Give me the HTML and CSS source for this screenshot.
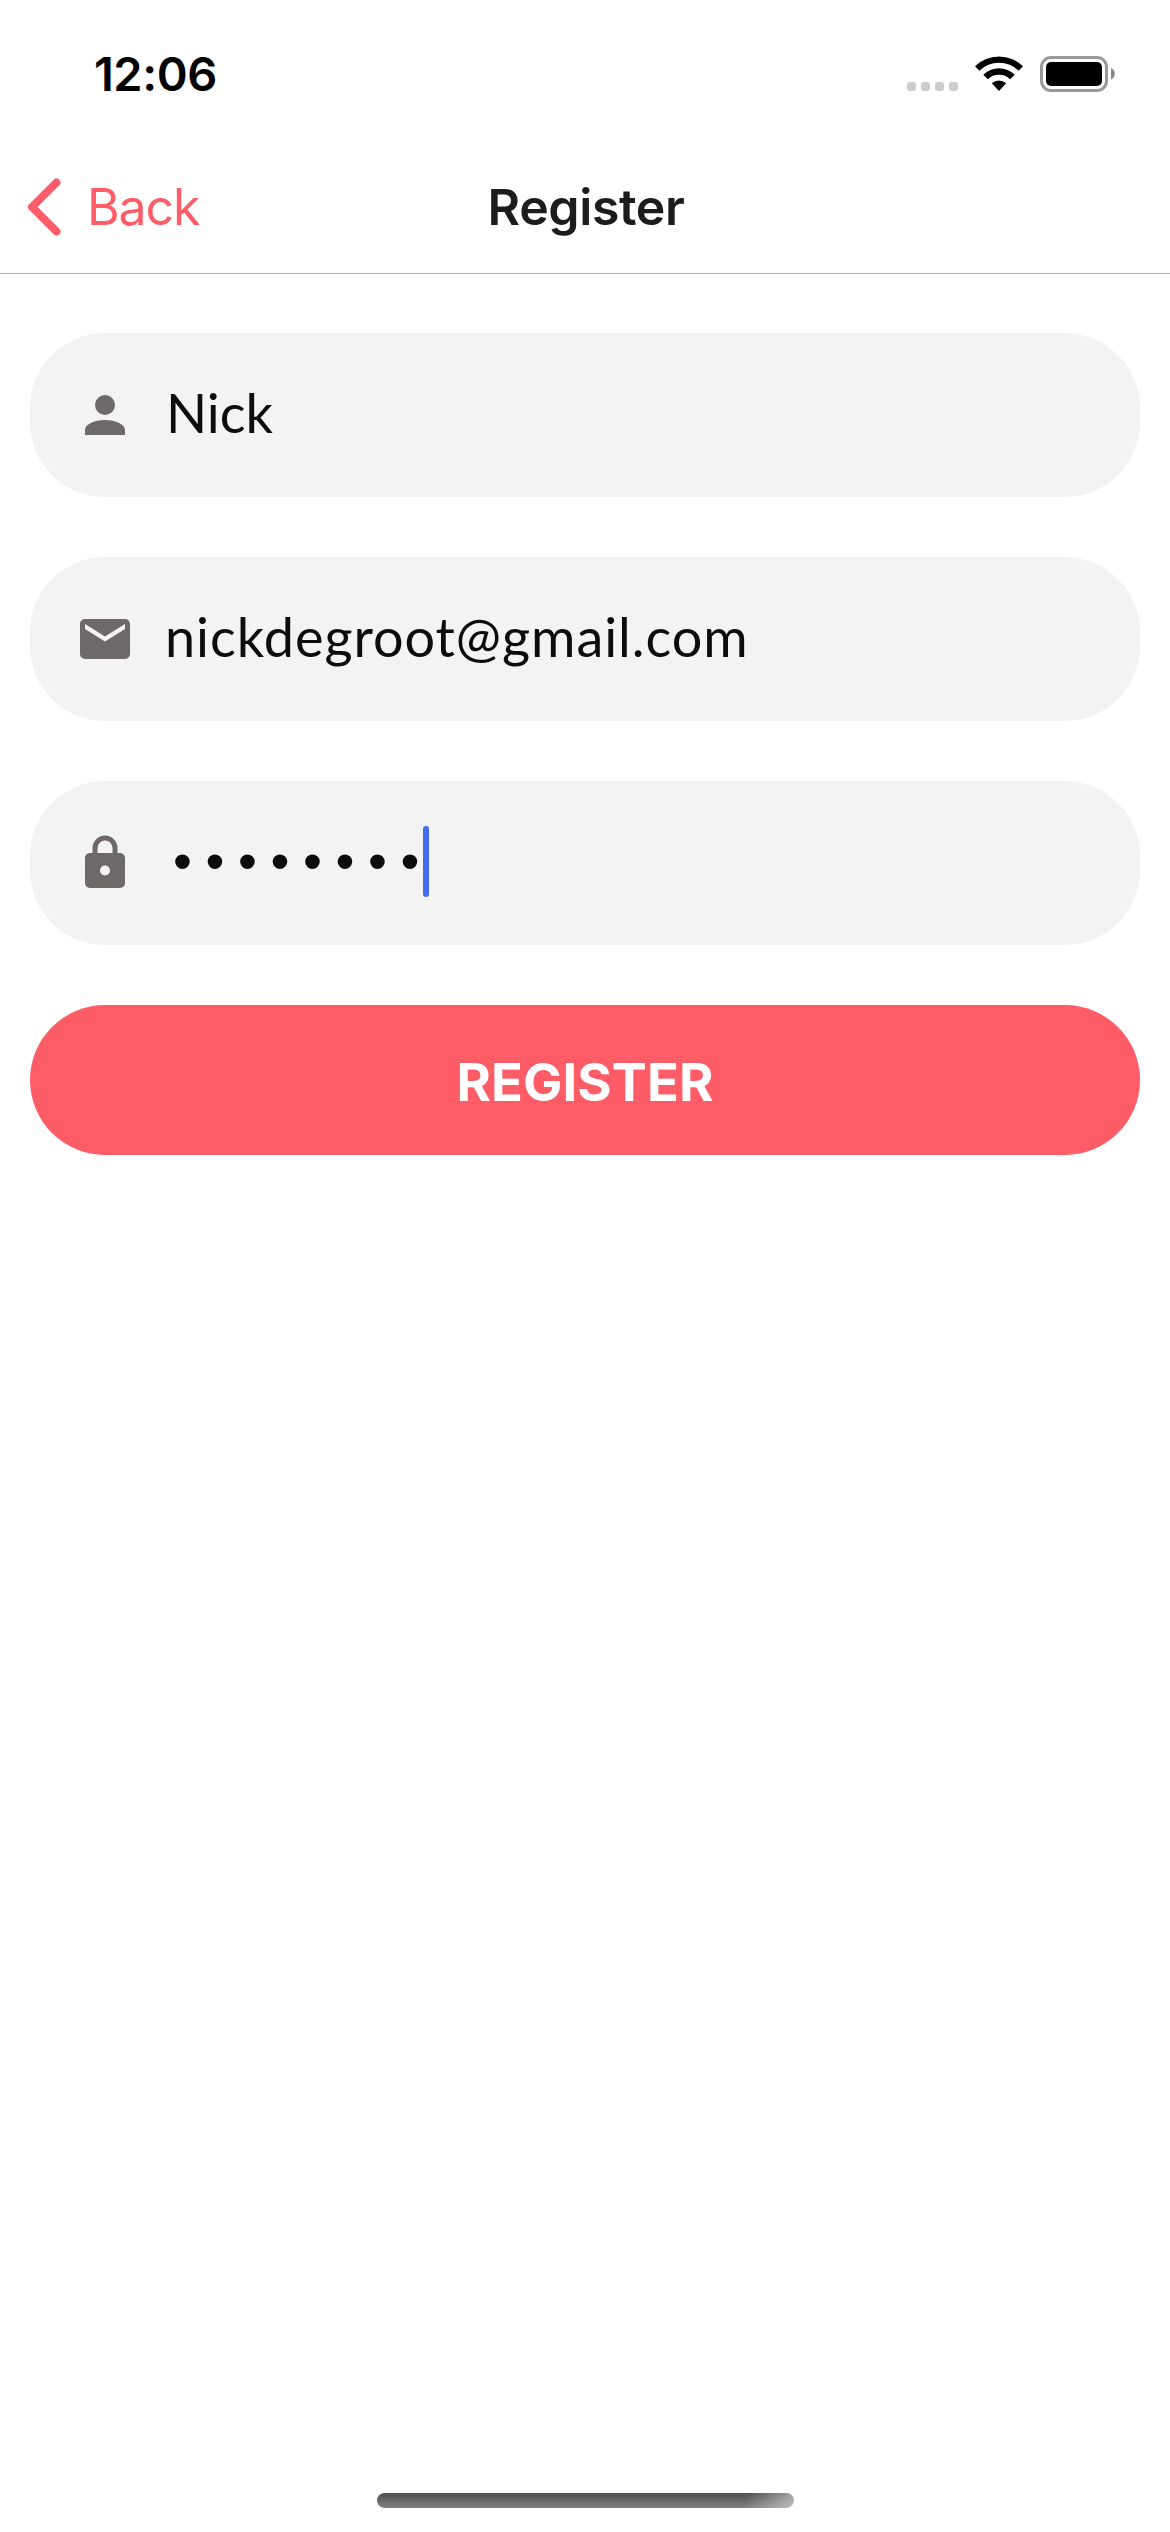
FILE: index.html
```html
<!DOCTYPE html>
<html lang="en">
<head>
<meta charset="utf-8">
<title>Register</title>
<link rel="stylesheet" href="styles.css">
</head>
<body>
<div class="screen">
  <div class="status-bar">
    <span class="time">12:06</span>
    <div class="indicators">
      <div class="signal"><i></i><i></i><i></i><i></i></div>
      <svg class="wifi" viewBox="0 0 48 36" width="48" height="36">
        <path d="M0 11.2A34.5 34.5 0 0 1 48 11.2L43.6 15.8A28 28 0 0 0 4.4 15.8Z"/>
        <path d="M8.3 19.7A22.5 22.5 0 0 1 39.7 19.7L35.1 24.3A16 16 0 0 0 12.9 24.3Z"/>
        <path d="M16.8 28.3A10.4 10.4 0 0 1 31.2 28.3L24 36Z"/>
      </svg>
      <svg class="battery" viewBox="0 0 75 36" width="75" height="36">
        <rect x="1.5" y="1.5" width="65" height="33" rx="9.5" fill="none" stroke="#999" stroke-width="3"/>
        <rect x="6" y="6" width="56" height="24" rx="5"/>
        <path d="M71 12C76 14 76 21.500 71 23.500Z" fill="#888"/>
      </svg>
    </div>
  </div>
  <header class="nav">
    <a class="back">
      <svg viewBox="0 0 34 58" width="34" height="58"><path d="M29.500 4.500L5 29L29.500 53.500" fill="none" stroke="currentColor" stroke-width="8" stroke-linecap="round" stroke-linejoin="round"/></svg>
      <span>Back</span>
    </a>
    <h1 class="title">Register</h1>
  </header>
  <main class="form">
    <div class="field">
      <svg class="icon" viewBox="0 0 24 24"><path d="M12 4A4 4 0 0 1 16 8A4 4 0 0 1 12 12A4 4 0 0 1 8 8A4 4 0 0 1 12 4M12 14C16.420 14 20 15.790 20 18V20H4V18C4 15.790 7.580 14 12 14Z"/></svg>
      <span class="value name">Nick</span>
    </div>
    <div class="field">
      <svg class="icon" viewBox="0 0 24 24"><path d="M20 8L12 13L4 8V6L12 11L20 6M20 4H4C2.890 4 2 4.890 2 6V18A2 2 0 0 0 4 20H20A2 2 0 0 0 22 18V6C22 4.890 21.100 4 20 4Z"/></svg>
      <span class="value email">nickdegroot@gmail.com</span>
    </div>
    <div class="field">
      <svg class="icon" viewBox="0 0 24 24"><path d="M12 17A2 2 0 0 0 14 15C14 13.890 13.100 13 12 13A2 2 0 0 0 10 15A2 2 0 0 0 12 17M18 8A2 2 0 0 1 20 10V20A2 2 0 0 1 18 22H6A2 2 0 0 1 4 20V10C4 8.890 4.900 8 6 8H7V6A5 5 0 0 1 12 1A5 5 0 0 1 17 6V8H18M12 3A3 3 0 0 0 9 6V8H15V6A3 3 0 0 0 12 3Z"/></svg>
      <span class="value password">••••••••</span><span class="caret"></span>
    </div>
    <button class="submit">REGISTER</button>
  </main>
  <div class="home-indicator"></div>
</div>
</body>
</html>
```

FILE: styles.css
```css
* { box-sizing: border-box; }
body { margin: 0; background: #fff; font-family: Inter, "Liberation Sans", sans-serif; }
.screen { width: 1170px; height: 2532px; display: flex; flex-direction: column; background: #fff; }
.status-bar { height: 141px; padding: 44px 55px 0 94px; display: flex; justify-content: space-between; align-items: flex-start; }
.time { font-size: 47px; font-weight: 600; line-height: 60px; color: #000; letter-spacing: -0.5px; }
.indicators { display: flex; padding-top: 11px; }
.signal { display: flex; gap: 5px; padding-top: 27px; margin-right: 17px; }
.signal i { width: 9px; height: 9px; border-radius: 3px; background: #ccc; }
.wifi { margin-right: 17px; }
.battery { margin-top: 1px; }
.nav { height: 133px; border-bottom: 1px solid #b0b0b2; display: grid; grid-template-columns: 1fr auto 1fr; align-items: center; }
.back { display: flex; align-items: center; gap: 26px; padding-left: 27px; color: #fe5d68; font-size: 50px; line-height: 66px; letter-spacing: -1.1px; }
.title { margin: 0; padding-left: 2px; font-size: 50px; line-height: 66px; font-weight: 600; color: #1c1c1e; letter-spacing: -0.4px; }
.form { flex: 1; padding: 59px 30px 0; display: flex; flex-direction: column; gap: 60px; }
.field { height: 164px; padding: 0 45px 1px; border-radius: 75px; background: #f3f3f3; display: flex; align-items: center; }
.icon { width: 60px; height: 60px; fill: #6e6969; }
.value { margin-left: 31px; padding-bottom: 4px; font-family: Lato, sans-serif; font-size: 54px; line-height: 70px; color: #0c0c0c; white-space: nowrap; }
.email { margin-left: 30px; letter-spacing: 0.95px; }
.password { margin-left: 38px; font-family: "Liberation Sans", sans-serif; letter-spacing: 13.6px; }
.caret { width: 6px; height: 71px; margin: 0 0 2px -10.5px; border-radius: 3px; background: #436cf3; }
.submit { height: 150px; padding: 3px 0 0; border: 0; border-radius: 75px; background: #fe5d68; color: #fff; font-family: inherit; font-size: 52.5px; font-weight: 700; letter-spacing: 0.1px; }
.home-indicator { width: 417px; height: 15px; margin: 0 auto 24px; border-radius: 8px; background: linear-gradient(110deg, transparent 88%, #ffffff80 100%), linear-gradient(#505050, #808080); }
```
